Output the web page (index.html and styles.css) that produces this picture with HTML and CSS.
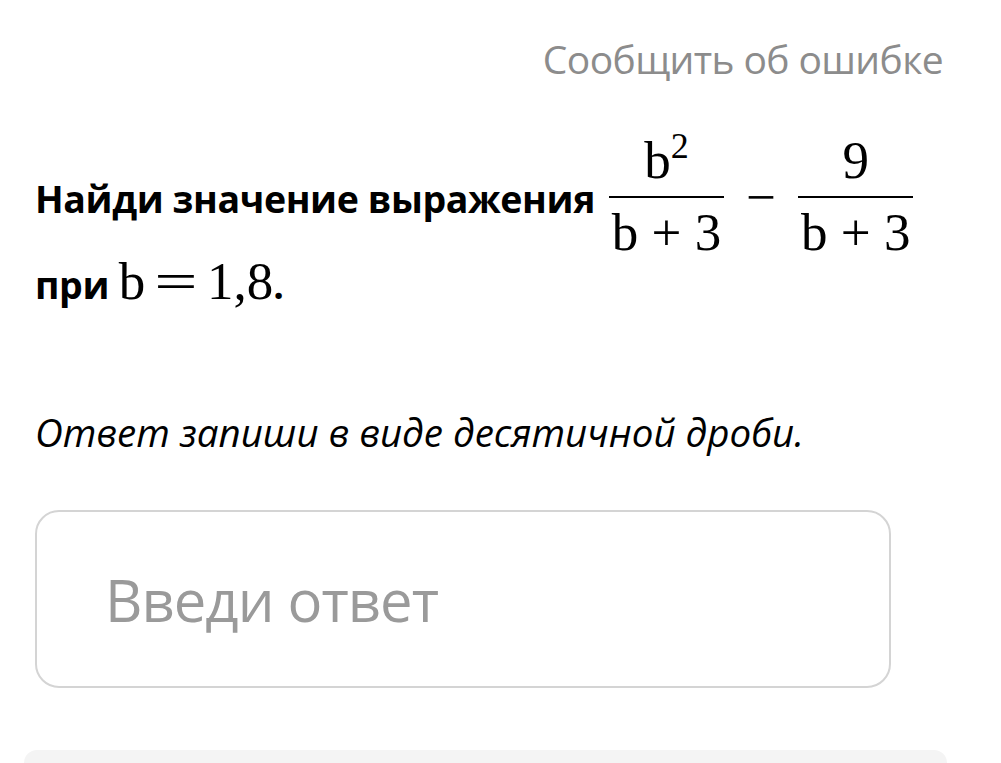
FILE: index.html
```html
<!DOCTYPE html>
<html lang="ru">
<head>
<meta charset="utf-8">
<title>Задание</title>
<link rel="stylesheet" href="styles.css">
</head>
<body>
<div class="page">
  <header class="top">
    <a class="report" href="#">Сообщить об ошибке</a>
  </header>
  <section class="task">
    <p class="question"><b>Найди значение выражения</b> <span class="math"><span class="frac"><span class="num">b<sup class="sup">2</sup></span><span class="bar"></span><span class="den">b<span class="op">+</span>3</span></span><span class="op minus">−</span><span class="frac"><span class="num">9</span><span class="bar"></span><span class="den">b<span class="op">+</span>3</span></span></span> <b>при</b> <span class="math">b<span class="rel">=</span>1,8</span><b>.</b></p>
    <p class="hint">Ответ запиши в виде десятичной дроби.</p>
    <label class="answer">
      <input class="answer-input" type="text" placeholder="Введи ответ">
    </label>
  </section>
  <div class="bottom-card"></div>
</div>
</body>
</html>
```
FILE: styles.css
```css
html, body {
  margin: 0;
  padding: 0;
  background: #ffffff;
}

body {
  font-family: "Open Sans", "Noto Sans", sans-serif;
  color: #000000;
  overflow: hidden;
}

.page {
  width: 1001px;
  height: 763px;
  display: flex;
  flex-direction: column;
}

.top {
  display: flex;
  justify-content: flex-end;
  padding: 31px 58px 0 0;
}

.report {
  font-size: 39px;
  line-height: 56px;
  color: #8c8c8c;
  text-decoration: none;
  letter-spacing: -0.6px;
}

.task {
  padding: 0 0 0 35px;
  width: 912px;
}

.question {
  margin: 50px 0 0;
  font-size: 37.5px;
  line-height: 60px;
}

.question b {
  font-weight: 700;
  letter-spacing: -0.4px;
}

.math {
  font-family: "Liberation Serif", "DejaVu Serif", serif;
  font-size: 53px;
  font-weight: 400;
}

.frac {
  display: inline-flex;
  flex-direction: column;
  align-items: center;
  vertical-align: 35px;
  margin: 0 4px;
  line-height: 1;
}

.num, .den {
  display: block;
  padding: 0 3px;
  line-height: 46px;
}

.num {
  padding-bottom: 13px;
}

.bar {
  display: block;
  align-self: stretch;
  height: 2px;
  background: #000000;
}

.den {
  padding-top: 11px;
  margin-bottom: -4px;
}

.sup {
  font-size: 0.68em;
  vertical-align: 0.55em;
  line-height: 0;
}

.op {
  margin: 0 0.25em;
}

.minus {
  margin: 0 0.34em;
  vertical-align: -2px;
}

.rel {
  margin: 0 0.3em;
  display: inline-block;
  transform: scaleX(1.45);
}

.hint {
  margin: 91px 0 0;
  font-size: 38.5px;
  line-height: 52px;
  font-style: italic;
  letter-spacing: 0;
}

.answer {
  display: flex;
  align-items: center;
  box-sizing: border-box;
  width: 856px;
  height: 178px;
  margin-top: 52px;
  border: 2px solid #d4d4d4;
  border-radius: 24px;
  padding: 0 0 0 68px;
}

.answer-input {
  border: none;
  outline: none;
  background: transparent;
  width: 100%;
  font-family: "Open Sans", "Noto Sans", sans-serif;
  font-size: 58px;
  color: #000000;
  padding: 0;
}

.answer-input::placeholder {
  color: #9a9a9a;
  letter-spacing: -1px;
}

.bottom-card {
  margin: 62px 54px 0 24px;
  flex: 1;
  background: #f4f4f4;
  border-radius: 24px 24px 0 0;
}
```
